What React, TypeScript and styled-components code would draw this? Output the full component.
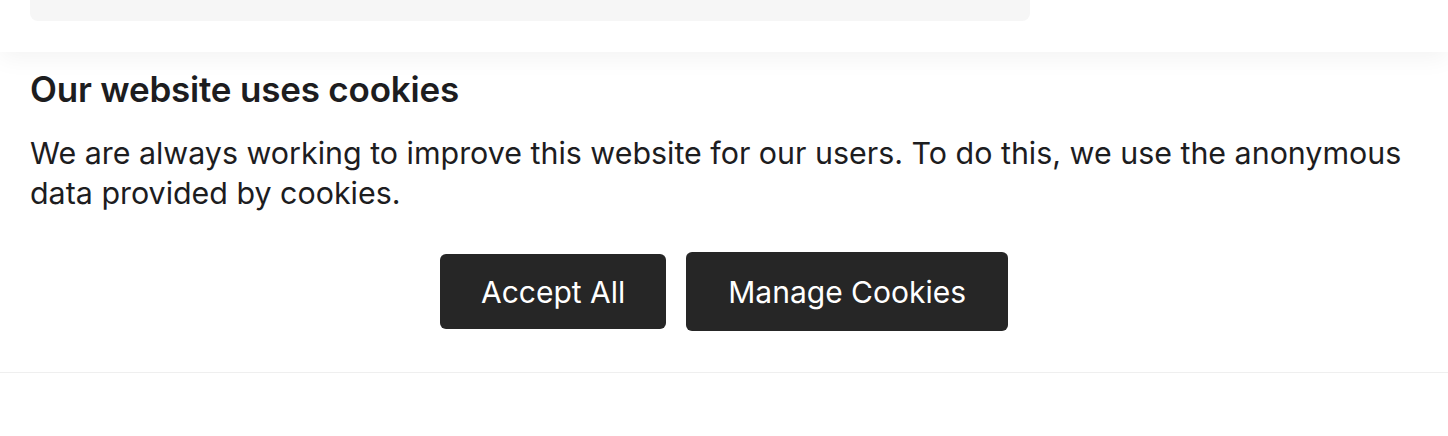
import React from "react";
import styled, { createGlobalStyle } from "styled-components";

const GlobalStyle = createGlobalStyle`
  html, body {
    margin: 0;
    padding: 0;
    background: #ffffff;
    font-family: Inter, "Noto Sans", "Liberation Sans", sans-serif;
    color: #1d1d1f;
  }
`;

const Page = styled.div`
  width: 1448px;
  display: flex;
  flex-direction: column;
`;

const TopSection = styled.div`
  position: relative;
  z-index: 2;
  background: #ffffff;
  padding: 0 30px 31px;
  box-shadow: 0 6px 24px rgba(0, 0, 0, 0.05);
`;

const Placeholder = styled.div`
  width: 1000px;
  height: 21px;
  background: #f6f6f6;
  border-radius: 0 0 8px 8px;
`;

const Banner = styled.section`
  position: relative;
  z-index: 1;
  background: #ffffff;
  padding: 16px 30px 41px;
  border-bottom: 1px solid #efefef;
  box-shadow: 0 2px 5px rgba(0, 0, 0, 0.06);
`;

const Title = styled.h2`
  margin: 0;
  font-size: 35px;
  line-height: 42px;
  font-weight: 600;
  letter-spacing: -0.2px;
  color: #1d1d1f;
`;

const Text = styled.p`
  margin: 23px 0 0;
  font-size: 30.4px;
  line-height: 40px;
  font-weight: 400;
  color: #1d1d1f;
`;

const Actions = styled.div`
  display: flex;
  justify-content: center;
  align-items: center;
  gap: 20px;
  margin-top: 39px;
`;

const Button = styled.button<{ $tall?: boolean }>`
  font-family: inherit;
  font-size: 30px;
  line-height: 1;
  color: #ffffff;
  background: #262626;
  border: none;
  border-radius: 6px;
  padding: 0 ${(p) => (p.$tall ? "42px" : "41px")};
  height: ${(p) => (p.$tall ? "79px" : "75px")};
  cursor: pointer;
`;

const App = () => (
  <>
    <GlobalStyle />
    <Page>
      <TopSection>
        <Placeholder />
      </TopSection>
      <Banner>
        <Title>Our website uses cookies</Title>
        <Text>
          We are always working to improve this website for our users. To do
          this, we use the anonymous data provided by cookies.
        </Text>
        <Actions>
          <Button>Accept All</Button>
          <Button $tall>Manage Cookies</Button>
        </Actions>
      </Banner>
    </Page>
  </>
);

export default App;
